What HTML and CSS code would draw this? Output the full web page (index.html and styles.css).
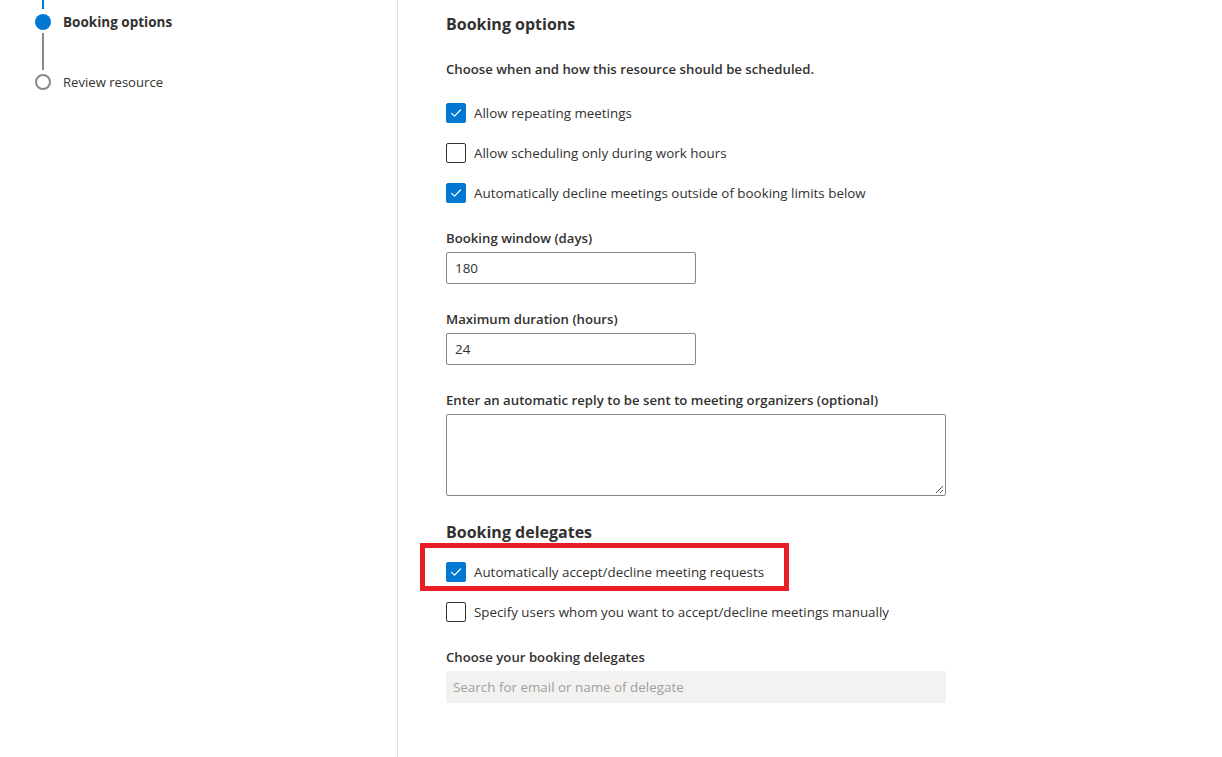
FILE: index.html
```html
<!DOCTYPE html>
<html lang="en">
<head>
<meta charset="utf-8">
<title>Booking options</title>
<link rel="stylesheet" href="styles.css">
</head>
<body>
<div class="page">
  <aside class="sidebar">
    <div class="steps">
      <div class="conn conn-top"></div>
      <div class="step">
        <span class="dot dot-active"></span>
        <span class="step-label step-label-active">Booking options</span>
      </div>
      <div class="conn conn-mid"></div>
      <div class="step">
        <span class="dot dot-empty"></span>
        <span class="step-label">Review resource</span>
      </div>
    </div>
  </aside>
  <main class="content">
    <h2 class="section-title">Booking options</h2>
    <p class="desc">Choose when and how this resource should be scheduled.</p>
    <div class="checks">
      <label class="check"><span class="box box-on"><svg viewBox="0 0 20 20" width="20" height="20"><path d="M5.6 10.3l2.9 2.9 6-6.2" fill="none" stroke="#fff" stroke-width="1.2" stroke-linecap="round" stroke-linejoin="round"/></svg></span><span>Allow repeating meetings</span></label>
      <label class="check"><span class="box"></span><span>Allow scheduling only during work hours</span></label>
      <label class="check"><span class="box box-on"><svg viewBox="0 0 20 20" width="20" height="20"><path d="M5.6 10.3l2.9 2.9 6-6.2" fill="none" stroke="#fff" stroke-width="1.2" stroke-linecap="round" stroke-linejoin="round"/></svg></span><span>Automatically decline meetings outside of booking limits below</span></label>
    </div>
    <div class="field">
      <div class="field-label">Booking window (days)</div>
      <div class="input">180</div>
    </div>
    <div class="field">
      <div class="field-label">Maximum duration (hours)</div>
      <div class="input">24</div>
    </div>
    <div class="field">
      <div class="field-label">Enter an automatic reply to be sent to meeting organizers (optional)</div>
      <div class="textarea"><svg class="grip" viewBox="0 0 10 10" width="10" height="10"><path d="M9 2L2 9M9 6L6 9" stroke="#555" stroke-width="1" fill="none"/></svg></div>
    </div>
    <h2 class="section-title section-title-2">Booking delegates</h2>
    <div class="checks checks-2">
      <label class="check"><span class="box box-on"><svg viewBox="0 0 20 20" width="20" height="20"><path d="M5.6 10.3l2.9 2.9 6-6.2" fill="none" stroke="#fff" stroke-width="1.2" stroke-linecap="round" stroke-linejoin="round"/></svg></span><span>Automatically accept/decline meeting requests</span><span class="highlight"></span></label>
      <label class="check"><span class="box"></span><span>Specify users whom you want to accept/decline meetings manually</span></label>
    </div>
    <div class="field">
      <div class="field-label">Choose your booking delegates</div>
      <div class="search">Search for email or name of delegate</div>
    </div>
  </main>
</div>
</body>
</html>
```

FILE: styles.css
```css
* { box-sizing: border-box; }
html, body { margin: 0; padding: 0; background: #fff; }
body {
  font-family: "Open Sans", "Noto Sans", "Liberation Sans", sans-serif;
  color: #323130;
  font-size: 13.4px;
}
.page { display: flex; min-height: 757px; }
.sidebar {
  width: 398px;
  flex: 0 0 398px;
  border-right: 1px solid #e1dfdd;
}
.steps { padding-left: 35px; display: flex; flex-direction: column; }
.conn { width: 2px; margin-left: 7px; }
.conn-top { height: 9px; background: #0078d4; margin-bottom: 5px; }
.conn-mid { height: 37px; background: #8a8886; margin-top: 3px; margin-bottom: 4px; }
.step { display: flex; align-items: center; gap: 12px; height: 16px; }
.dot { width: 16px; height: 16px; border-radius: 50%; flex: 0 0 16px; }
.dot-active { background: #0078d4; }
.dot-empty { border: 2px solid #8a8886; }
.step-label { font-size: 13.1px; }
.step-label-active { font-weight: 700; font-size: 13.5px; }

.content { padding: 13px 0 0 48px; flex: 1; }
.section-title {
  margin: 0;
  font-size: 16px;
  line-height: 22px;
  font-weight: 700;
}
.section-title-2 { margin-top: 25px; }
.desc {
  margin: 24px 0 0;
  font-size: 13.2px;
  line-height: 20px;
  font-weight: 600;
}
.checks { display: flex; flex-direction: column; gap: 20px; margin-top: 24px; }
.checks-2 { margin-top: 19px; }
.check {
  display: flex;
  align-items: center;
  gap: 8px;
  height: 20px;
  font-size: 13.4px;
  line-height: 20px;
  position: relative;
}
.checks-2 .check { font-size: 13.35px; }
.box {
  width: 20px; height: 20px; flex: 0 0 20px;
  border: 1px solid #323130;
  border-radius: 2px;
  display: flex;
}
.box-on { background: #0078d4; border-color: #0078d4; }
.box-on svg { margin: -1px; }
.highlight {
  position: absolute;
  left: -26px;
  top: -19px;
  width: 369px;
  height: 48px;
  border: 5px solid #e81d25;
  pointer-events: none;
}
.field { margin-top: 25px; }
.field-label {
  font-size: 13.2px;
  line-height: 20px;
  font-weight: 600;
  margin-bottom: 4px;
}
.input {
  width: 250px;
  height: 32px;
  border: 1px solid #8a8886;
  border-radius: 2px;
  padding: 0 8px;
  font-size: 13.4px;
  line-height: 30px;
}
.textarea {
  width: 500px;
  height: 82px;
  border: 1px solid #8a8886;
  border-radius: 2px;
  position: relative;
}
.grip { position: absolute; right: 1px; bottom: 1px; }
.search {
  width: 500px;
  height: 32px;
  background: #f3f2f1;
  border-radius: 2px;
  padding: 0 7px;
  font-size: 13.4px;
  line-height: 32px;
  color: #a19f9d;
}
```
